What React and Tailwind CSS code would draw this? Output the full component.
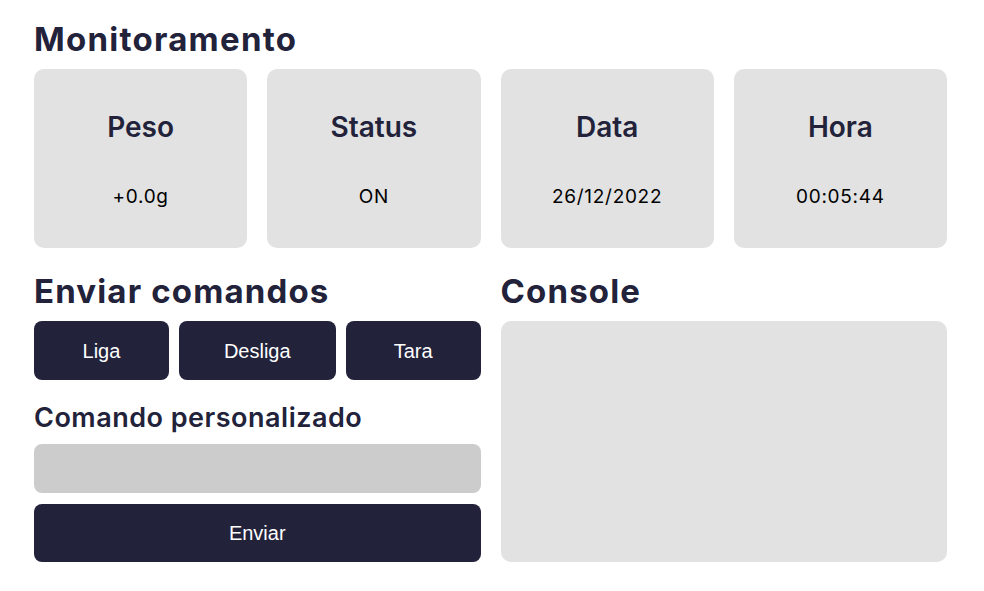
import { useState } from 'react';

const cards = [
  { title: 'Peso', value: '+0.0g' },
  { title: 'Status', value: 'ON' },
  { title: 'Data', value: '26/12/2022' },
  { title: 'Hora', value: '00:05:44' },
];

export default function App() {
  const [comando, setComando] = useState('');

  return (
    <div className="min-h-screen bg-white pl-[34px] pr-[37px] pt-[20px] font-['Inter',sans-serif] text-[#22223b]">
      <div className="w-[913px]">
        <h1 className="text-[33px] font-bold leading-[38px] tracking-[1.25px] mb-[11px]">Monitoramento</h1>

        <div className="grid grid-cols-4 gap-[20px]">
          {cards.map((card) => (
            <div
              key={card.title}
              className="h-[179px] rounded-[10px] bg-[#e2e2e2] flex flex-col items-center pt-[41px] gap-[41px]"
            >
              <h2 className="text-[28px] font-semibold leading-[34px]">{card.title}</h2>
              <p className="text-[19px] leading-[23px] tracking-[0.7px] text-black">{card.value}</p>
            </div>
          ))}
        </div>

        <div className="grid grid-cols-2 gap-x-[20px] mt-[24px]">
          <div className="flex flex-col">
            <h1 className="text-[33px] font-bold leading-[38px] tracking-[1.15px] mb-[11px]">Enviar comandos</h1>
            <div className="flex gap-[10px]">
              <button className="w-[135px] h-[59px] rounded-lg bg-[#22223b] text-white text-[20px] font-['Liberation_Sans',Arial,sans-serif]">
                Liga
              </button>
              <button className="w-[157px] h-[59px] rounded-lg bg-[#22223b] text-white text-[20px] font-['Liberation_Sans',Arial,sans-serif]">
                Desliga
              </button>
              <button className="w-[135px] h-[59px] rounded-lg bg-[#22223b] text-white text-[20px] font-['Liberation_Sans',Arial,sans-serif]">
                Tara
              </button>
            </div>

            <h2 className="text-[27px] font-semibold leading-[32px] tracking-[0.5px] mt-[22px] mb-[10px]">
              Comando personalizado
            </h2>
            <input
              value={comando}
              onChange={(e) => setComando(e.target.value)}
              className="h-[49px] w-full rounded-lg bg-[#cccccc] px-3 outline-none text-[18px]"
            />
            <button className="mt-[11px] h-[58px] w-full rounded-lg bg-[#22223b] text-white text-[20px] font-['Liberation_Sans',Arial,sans-serif]">
              Enviar
            </button>
          </div>

          <div className="flex flex-col">
            <h1 className="text-[33px] font-bold leading-[38px] tracking-[1.15px] mb-[11px]">Console</h1>
            <div className="flex-1 rounded-[10px] bg-[#e2e2e2]"></div>
          </div>
        </div>
      </div>
    </div>
  );
}
